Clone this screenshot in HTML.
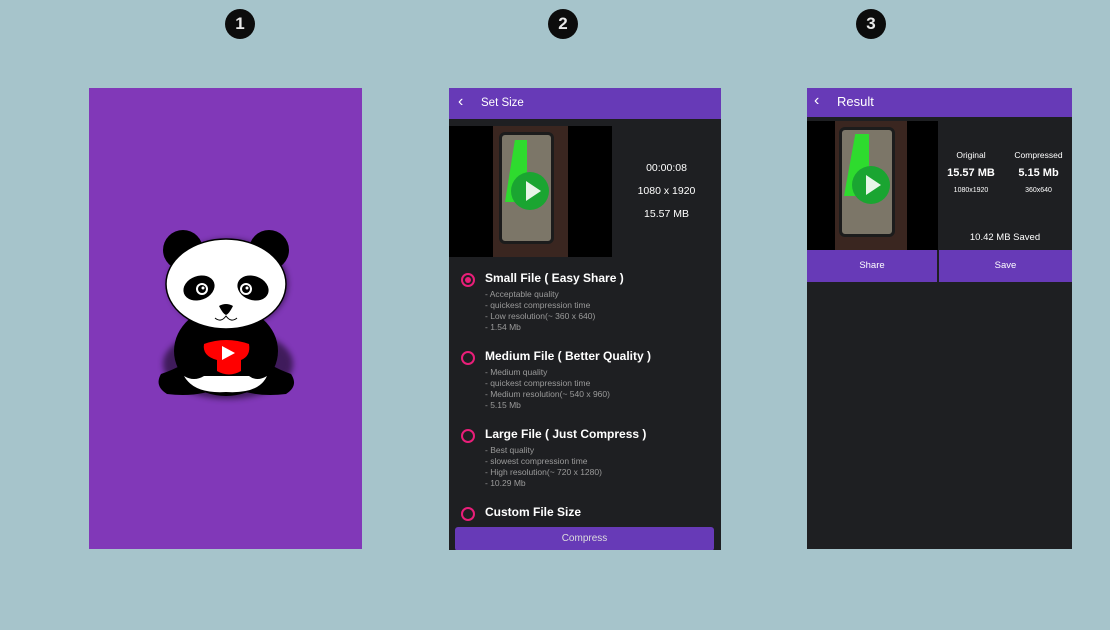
<!DOCTYPE html>
<html><head><meta charset="utf-8"><style>
*{margin:0;padding:0;box-sizing:border-box}
body{width:1110px;height:630px;background:#a6c4cb;position:relative;overflow:hidden;font-family:"Liberation Sans",sans-serif}
.a{position:absolute}
.num{position:absolute;width:30px;height:30px;border-radius:50%;background:#0c0c0c;color:#e8e8e8;font-weight:bold;font-size:17px;text-align:center;line-height:30px}
.hdr{background:#673ab7;color:#fff}
.t{color:#fff}
.opt{position:absolute;left:12px}
.opt .r{position:absolute;left:0;top:2px;width:14px;height:14px;border:2px solid #e91e79;border-radius:50%}
.opt .r.on::after{content:"";position:absolute;left:2px;top:2px;width:6px;height:6px;border-radius:50%;background:#e91e79}
.opt .h{position:absolute;left:24px;top:0;color:#fff;font-size:12px;font-weight:bold;white-space:nowrap}
.opt .d{position:absolute;left:24px;top:18px;color:#9a9a9a;font-size:8.5px;line-height:11px;white-space:nowrap}
</style></head><body>
<div class="num" style="left:225px;top:9px">1</div>
<div class="num" style="left:548px;top:9px">2</div>
<div class="num" style="left:856px;top:9px">3</div>

<!-- screen 1 -->
<div class="a" style="left:89px;top:88px;width:273px;height:461px;background:#8138b8">
<svg class="a" style="left:60px;top:138px" width="155" height="180" viewBox="0 0 155 180">
<defs><filter id="s"><feGaussianBlur stdDeviation="3"/></filter></defs>
<g filter="url(#s)" opacity=".5" transform="translate(2,3)"><ellipse cx="77" cy="55" rx="60" ry="45"/><ellipse cx="77" cy="135" rx="65" ry="35"/></g>
<circle cx="34" cy="24" r="20" fill="#000"/><circle cx="120" cy="24" r="20" fill="#000"/>
<path d="M12 148 Q5 160 18 168 Q50 172 75 160 L80 160 Q105 172 137 168 Q150 160 142 148 Q120 140 110 130 L45 130 Q35 140 12 148Z" fill="#000"/>
<ellipse cx="77" cy="125" rx="52" ry="45" fill="#000"/>
<path d="M35 150 Q45 168 77 166 Q110 168 118 150 Q108 156 100 150 L55 150 Q45 156 35 150Z" fill="#fff"/>
<ellipse cx="77" cy="58" rx="60" ry="45" fill="#fff" stroke="#000" stroke-width="1.5"/>
<ellipse cx="50" cy="62" rx="16" ry="12" fill="#000" transform="rotate(-20 50 62)"/>
<ellipse cx="104" cy="62" rx="16" ry="12" fill="#000" transform="rotate(20 104 62)"/>
<circle cx="53" cy="63" r="6" fill="#fff"/><circle cx="53" cy="63" r="4" fill="#000"/><circle cx="54" cy="62" r="1.5" fill="#fff"/>
<circle cx="97" cy="63" r="6" fill="#fff"/><circle cx="97" cy="63" r="4" fill="#000"/><circle cx="98" cy="62" r="1.5" fill="#fff"/>
<path d="M70 80 Q77 76 84 80 Q80 88 77 89 Q74 88 70 80Z" fill="#000"/>
<path d="M66 92 Q72 97 77 90 Q82 97 88 92" fill="none" stroke="#000"/>
<path d="M55 118 Q77 110 100 118 Q102 130 92 134 L92 145 Q80 152 68 145 L68 134 Q53 130 55 118Z" fill="#f00"/>
<path d="M73 120 L86 127 L73 134Z" fill="#fff"/>
</svg>
</div>

<!-- screen 2 -->
<div class="a" style="left:449px;top:88px;width:272px;height:462px;background:#1e1f22;overflow:hidden">
<div class="a hdr" style="left:0;top:0;width:272px;height:31px"></div>
<div class="a t" style="left:9px;top:5px;font-size:16px">‹</div>
<div class="a t" style="left:32px;top:9px;font-size:11.5px">Set Size</div>
<div class="a" style="left:0;top:38px;width:163px;height:131px;background:#000"></div>
<div class="a" style="left:44px;top:38px;width:75px;height:131px;background:#3a2620"></div>
<div class="a" style="left:50px;top:44px;width:55px;height:112px;border-radius:6px;background:#7c7668;border:3px solid #1c1c1c"></div>
<div class="a" style="left:56px;top:52px;width:22px;height:62px;background:#2edb2e;clip-path:polygon(45% 0,100% 0,100% 100%,0 100%)"></div>
<div class="a" style="left:62px;top:84px;width:38px;height:38px;border-radius:50%;background:#1aa531"></div>
<div class="a" style="left:77px;top:93px;width:0;height:0;border-top:10px solid transparent;border-bottom:10px solid transparent;border-left:15px solid #e8f5e8"></div>
<div class="a t" style="left:163px;top:69px;width:109px;text-align:center;font-size:10.5px;line-height:23px">00:00:08<br>1080 x 1920<br>15.57 MB</div>
<div class="opt" style="top:183px"><div class="r on"></div><div class="h">Small File ( Easy Share )</div><div class="d">- Acceptable quality<br>- quickest compression time<br>- Low resolution(~ 360 x 640)<br>- 1.54 Mb</div></div>
<div class="opt" style="top:261px"><div class="r"></div><div class="h">Medium File ( Better Quality )</div><div class="d">- Medium quality<br>- quickest compression time<br>- Medium resolution(~ 540 x 960)<br>- 5.15 Mb</div></div>
<div class="opt" style="top:339px"><div class="r"></div><div class="h">Large File ( Just Compress )</div><div class="d">- Best quality<br>- slowest compression time<br>- High resolution(~ 720 x 1280)<br>- 10.29 Mb</div></div>
<div class="opt" style="top:417px"><div class="r"></div><div class="h">Custom File Size</div></div>
<div class="a" style="left:6px;top:439px;width:259px;height:24px;background:#673ab7;border-radius:3px;color:#ddd;font-size:10px;text-align:center;line-height:24px">Compress</div>
</div>

<!-- screen 3 -->
<div class="a" style="left:807px;top:88px;width:265px;height:461px;background:#1e1f22;overflow:hidden">
<div class="a hdr" style="left:0;top:0;width:265px;height:29px"></div>
<div class="a t" style="left:7px;top:4px;font-size:16px">‹</div>
<div class="a t" style="left:30px;top:6px;font-size:13px">Result</div>
<div class="a" style="left:0;top:33px;width:131px;height:129px;background:#000"></div>
<div class="a" style="left:28px;top:33px;width:72px;height:129px;background:#3a2620"></div>
<div class="a" style="left:32px;top:39px;width:56px;height:110px;border-radius:6px;background:#7c7668;border:3px solid #1c1c1c"></div>
<div class="a" style="left:37px;top:46px;width:25px;height:62px;background:#2edb2e;clip-path:polygon(45% 0,100% 0,100% 100%,0 100%)"></div>
<div class="a" style="left:45px;top:78px;width:38px;height:38px;border-radius:50%;background:#1aa531"></div>
<div class="a" style="left:59px;top:87px;width:0;height:0;border-top:10px solid transparent;border-bottom:10px solid transparent;border-left:15px solid #e8f5e8"></div>
<div class="a t" style="left:131px;top:62px;width:66px;text-align:center;font-size:8.5px">Original</div>
<div class="a t" style="left:198px;top:62px;width:67px;text-align:center;font-size:8.5px">Compressed</div>
<div class="a t" style="left:131px;top:79px;width:66px;text-align:center;font-size:11px;font-weight:bold">15.57 MB</div>
<div class="a t" style="left:198px;top:79px;width:67px;text-align:center;font-size:11px;font-weight:bold">5.15 Mb</div>
<div class="a t" style="left:131px;top:99px;width:66px;text-align:center;font-size:7px">1080x1920</div>
<div class="a t" style="left:198px;top:99px;width:67px;text-align:center;font-size:7px">360x640</div>
<div class="a t" style="left:131px;top:144px;width:134px;text-align:center;font-size:9.5px">10.42 MB Saved</div>
<div class="a" style="left:0;top:162px;width:130px;height:32px;background:#673ab7;color:#fff;font-size:9.5px;text-align:center;line-height:32px">Share</div>
<div class="a" style="left:132px;top:162px;width:133px;height:32px;background:#673ab7;color:#fff;font-size:9.5px;text-align:center;line-height:32px">Save</div>
</div>
</body></html>
